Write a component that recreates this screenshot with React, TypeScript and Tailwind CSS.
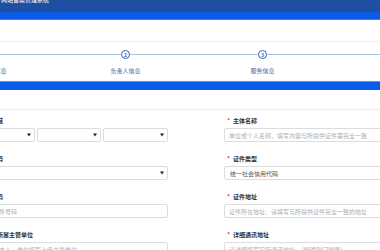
import React from "react";

const font = { fontFamily: '"Noto Sans CJK SC", "Noto Sans", sans-serif' };

function Arrow() {
  return (
    <span className="absolute right-[3px] top-1/2 -translate-y-1/2 w-0 h-0 border-l-[2px] border-r-[2px] border-t-[3px] border-l-transparent border-r-transparent border-t-[#222]" />
  );
}

function Select({ value, className = "" }: { value?: string; className?: string }) {
  return (
    <div className={`relative h-[14px] border border-[#dcdcdc] rounded-[2px] bg-white flex items-center pl-[5px] text-[6px] text-[#555] ${className}`}>
      <span className="whitespace-nowrap">{value ?? ""}</span>
      <Arrow />
    </div>
  );
}

function Input({ placeholder }: { placeholder: string }) {
  return (
    <div className="h-[14px] border border-[#dcdcdc] rounded-[2px] bg-white flex items-center pl-[4px] text-[6px] text-[#b0b0b0] overflow-hidden">
      <span className="whitespace-nowrap">{placeholder}</span>
    </div>
  );
}

function Label({ text }: { text: string }) {
  return (
    <div className="h-[8px] leading-[8px] mb-[3px] pl-[3px] flex items-center text-[6px] font-semibold text-[#333] whitespace-nowrap">
      <span className="w-[6px] text-[#e0443c]">*</span>
      <span>{text}</span>
    </div>
  );
}

function Step({ n, label }: { n: number; label: string }) {
  return (
    <div className="w-[137px] shrink-0 flex flex-col items-center">
      <div className="w-[9px] h-[9px] rounded-full border border-[#2b66bd] bg-white flex items-center justify-center text-[5px] leading-none font-bold text-[#2b66bd]">
        {n}
      </div>
      <div className="mt-[8px] text-[6px] leading-[8px] text-[#3f68a8] whitespace-nowrap">{label}</div>
    </div>
  );
}

export default function App() {
  return (
    <div className="w-[380px] h-[250px] overflow-hidden bg-white" style={font}>
      <div className="h-[12px] bg-[#1f4fa2] overflow-hidden">
        <div className="-mt-[4px] pl-[1px] text-[6px] leading-[7px] text-white whitespace-nowrap">网站备案管理系统</div>
      </div>
      <div className="h-[8px] bg-[#0b5de6] border-b border-[#3d7cec]" />
      <div className="h-[22px] bg-white border-b border-[#efefef]" />
      <div className="relative h-[39px] bg-white">
        <div className="absolute left-0 right-0 top-[12px] h-px bg-[#a9c6de]" />
        <div className="relative flex pt-[8px] ml-[-80px]">
          <Step n={1} label="主办单位信息" />
          <Step n={2} label="负责人信息" />
          <Step n={3} label="服务信息" />
          <Step n={4} label="网站信息" />
        </div>
      </div>
      <div className="h-[9px] bg-[#0b5ce6] border-t border-[#5b93ef]" />
      <div className="h-[20px] bg-white border-b border-[#eeeeee]" />
      <div className="pt-[7px] ml-[-30px] grid grid-cols-[198px_198px] gap-x-[56px] gap-y-[13px]">
        <div>
          <Label text="所属区域" />
          <div className="flex gap-[2px]">
            <Select className="flex-1" />
            <Select className="flex-1" />
            <Select className="flex-1" />
          </div>
        </div>
        <div>
          <Label text="主体名称" />
          <Input placeholder="单位或个人名称，填写内容与所提供证件需完全一致" />
        </div>
        <div>
          <Label text="单位代码" />
          <Select />
        </div>
        <div>
          <Label text="证件类型" />
          <Select value="统一社会信用代码" />
        </div>
        <div>
          <Label text="证件号码" />
          <Input placeholder="请填写证件号码" />
        </div>
        <div>
          <Label text="证件地址" />
          <Input placeholder="证件所在地址，请填写与所提供证件完全一致的地址" />
        </div>
        <div>
          <Label text="投资人所属主管单位" />
          <Input placeholder="个人填写本人，单位填写上级主管单位" />
        </div>
        <div>
          <Label text="详细通讯地址" />
          <Input placeholder="请详细填写实际通讯地址，（精确到门牌号）" />
        </div>
      </div>
    </div>
  );
}
